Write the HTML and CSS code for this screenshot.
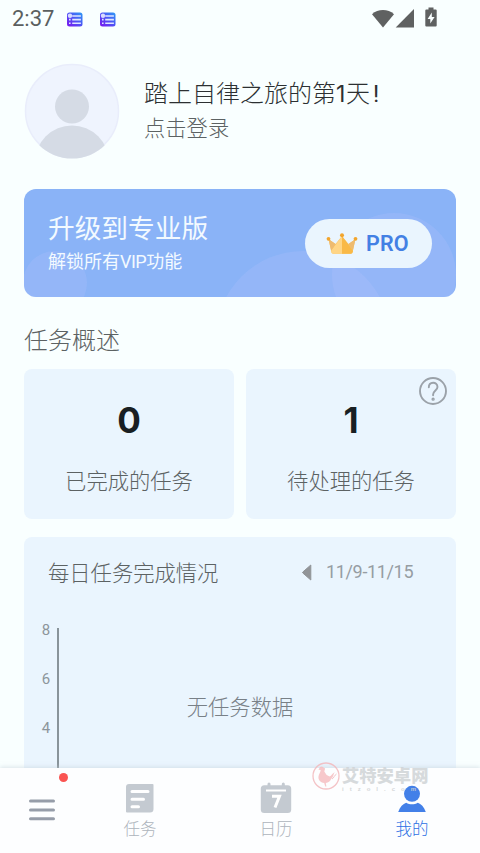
FILE: index.html
```html
<!DOCTYPE html>
<html lang="zh-CN">
<head>
<meta charset="utf-8">
<meta name="viewport" content="width=device-width, initial-scale=1">
<title>我的</title>
<link rel="stylesheet" href="styles.css">
</head>
<body>
<div class="app">
  <header class="status">
    <span class="clock">2:37</span>
    <svg class="notice" viewBox="0 0 16 15"><defs><linearGradient id="g" x1="0" y1="1" x2="1" y2="0"><stop offset="0.1" stop-color="#7420f0"/><stop offset="0.55" stop-color="#4b58f5"/><stop offset="1" stop-color="#2d9cf5"/></linearGradient></defs><rect y=".5" width="15.500" height="14" rx="2.500" fill="url(#g)"/><path d="M5.200 4h8.700M5.200 7.600h8.700M5.200 11.200h8.700M2 7.600h1.600M2 11.200h1.600" stroke="#dfe6ff" stroke-width="1.600"/><circle cx="3" cy="3.700" r="2.200" fill="#d8dcff"/></svg>
    <svg class="notice second" viewBox="0 0 16 15"><rect y=".5" width="15.500" height="14" rx="2.500" fill="url(#g)"/><path d="M5.200 4h8.700M5.200 7.600h8.700M5.200 11.200h8.700M2 7.600h1.600M2 11.200h1.600" stroke="#dfe6ff" stroke-width="1.600"/><circle cx="3" cy="3.700" r="2.200" fill="#d8dcff"/></svg>
    <svg class="signals" viewBox="0 0 68 22" fill="#5f6161"><path d="M1 7.200C7 1.600 17 1.600 23 7.200L12 20.500z"/><path d="M43 2v18.500H24.700z"/><path fill-rule="evenodd" d="M57.500 0.500h5v2h2.200a1 1 0 0 1 1 1v15a1 1 0 0 1-1 1h-9.400a1 1 0 0 1-1-1v-15a1 1 0 0 1 1-1h2.200zM60.800 5.500l-4.200 6.500h2.700v4.500l4.300-6.500h-2.800z"/></svg>
  </header>
  <main>
    <section class="profile">
      <svg class="avatar" viewBox="0 0 96 96"><defs><clipPath id="c"><circle cx="48" cy="48" r="47.500"/></clipPath></defs><circle cx="48" cy="48" r="46.500" fill="#eff4fe" stroke="#e9edfb" stroke-width="1.500"/><g clip-path="url(#c)" fill="#d5dbe5"><circle cx="48" cy="43.500" r="17"/><circle cx="48" cy="99.500" r="37"/></g></svg>
      <div>
        <h1>踏上自律之旅的第<span class="one">1</span>天<span class="bang">!</span></h1>
        <p>点击登录</p>
      </div>
    </section>
    <section class="banner">
      <svg class="bubbles" viewBox="0 0 432 108"><g fill="#c0c5ff" fill-opacity=".18"><circle cx="31" cy="94" r="32"/><circle cx="279" cy="149" r="87"/><circle cx="370" cy="86" r="62"/></g></svg>
      <div class="offer"><h2>升级到专业版</h2><p>解锁所有<span>VIP</span>功能</p></div>
      <div class="pro"><svg viewBox="0 0 32 22"><path d="M2.500 6l7 5L16 3l6.500 8 7-5-2.800 13a2 2 0 0 1-2 1.700H7.300a2 2 0 0 1-2-1.700z" fill="#f9c363"/><path d="M5 18l11-15v17.700H7.300a2 2 0 0 1-2-1.700z" fill="#ffd585"/><path d="M16 3l11 15-.3 1a2 2 0 0 1-2 1.700H16z" fill="#f9b947"/><path d="M2.500 6l7 5-4.300 6.500zM29.500 6l-7 5 4.300 6.500z" fill="#eebb70"/><g fill="#f2a52d"><circle cx="2.500" cy="5.800" r="1.900"/><circle cx="16" cy="2.300" r="2"/><circle cx="29.500" cy="5.800" r="1.900"/></g></svg><span>PRO</span></div>
    </section>
    <h3>任务概述</h3>
    <section class="stats">
      <div class="card stat"><b>0</b><span>已完成的任务</span></div>
      <div class="card stat"><b>1</b><span>待处理的任务</span>
        <svg class="help" viewBox="0 0 28 28" fill="none" stroke="#9ba2a9" stroke-width="1.900"><circle cx="14" cy="14" r="13"/><path d="M9.800 10.300C9.800 4.300 18.400 4.200 18.500 10c0 3.300-4.400 3.900-4.400 7.600v.6" stroke-linecap="round"/><circle cx="14.100" cy="22.200" r=".7"/></svg>
      </div>
    </section>
    <section class="card chart">
      <div class="chart-head"><h4>每日任务完成情况</h4><svg viewBox="0 0 10 17"><path d="M8.800 1v15L.8 9q-.6-.5 0-1z" fill="#919498" stroke="#919498" stroke-linejoin="round"/></svg><span>11/9-11/15</span></div>
      <div class="plot"><div class="axis"><span>8</span><span>6</span><span>4</span></div><div class="empty">无任务数据</div></div>
    </section>
  </main>
  <nav>
    <div class="menu"><svg viewBox="0 0 28 22" stroke="#969da9" stroke-width="3" stroke-linecap="round"><path d="M2.500 2h23M2.500 11h23M2.500 19.800h23"/></svg><i class="dot"></i></div>
    <div class="tab"><svg viewBox="0 0 32 32"><path d="M5 2h23.500a1 1 0 0 1 1 1v24a3.500 3.500 0 0 1-3.500 3.500H3a1 1 0 0 1-1-1V5a3 3 0 0 1 3-3z" fill="#c4cad1"/><path d="M8 9.500h16M8 17.200h11.500M8 24.700h6.500" stroke="#fff" stroke-width="3" stroke-linecap="round"/></svg><span>任务</span></div>
    <div class="tab"><svg viewBox="0 0 32 32"><rect x=".8" y="3.200" width="30.400" height="27.800" rx="3.500" fill="#c4cad1"/><path d="M9 2v4M23.300 2v4" stroke="#c4cad1" stroke-width="3" stroke-linecap="round"/><path d="M6 8.500h20" stroke="#fff" stroke-width="2"/><path d="M12 14.200h7.500L15 25.500" fill="none" stroke="#fff" stroke-width="3"/></svg><span>日历</span></div>
    <div class="tab active"><svg viewBox="0 0 32 32" fill="#4380e8"><circle cx="16" cy="11.800" r="8"/><path d="M2.200 30C4 25 7 21.800 10.200 20.800c3.600 2 8 2 11.600 0C25 21.800 28 25 29.800 30z"/></svg><span>我的</span></div>
  </nav>
  <div class="watermark"><svg viewBox="0 0 28 28"><circle cx="14" cy="14" r="13" fill="none" stroke="#f3b9bd" stroke-width="1.300"/><path d="M8 5l2-.6 1.500 1 1.600 1-.8 3 2.300 3.600 3 1.600c2-.7 2.600-3.300 5.200-4.300-1.600 1.500-1 4.500-3.500 6.500-1.200 2.500-3 3.800-5.500 4.200l.6 3.500h-1.200l-1-3.500c-4-.4-6.200-3.500-5.700-6.500.3-2.300 2-4 2.200-6.500L6.500 7.800z" fill="#f6bfc2"/><path d="M20 17c2-1 2.300-3.700 4.500-5" fill="none" stroke="#f3b9bd"/></svg><div><strong>艾特安卓网</strong><small>itzol.com</small></div></div>
</div>
</body>
</html>
```
FILE: styles.css
```css
* { box-sizing: border-box; }
body, h1, h2, h3, h4, p { margin: 0; font-weight: 400; }
body { font-family: "Noto Sans CJK SC", sans-serif; color: #5c6263; background: #f9ffff; }
svg { display: block; flex: none; }
.app { position: relative; width: 480px; height: 853px; overflow: hidden; display: flex; flex-direction: column; }
.status { height: 37px; flex: none; display: flex; align-items: center; padding: 1px 41px 0 12px; }
.clock { font: 22px/34px Roboto, sans-serif; color: #5b5f5f; width: 55px; }
.notice { width: 16px; height: 15px; }
.second { margin-left: 17px; }
.signals { width: 68px; height: 22px; margin: -2px 0 0 auto; }
main { flex: 1; min-height: 0; overflow: hidden; padding: 26px 24px 0; display: flex; flex-direction: column; }
.profile { display: flex; gap: 24px; height: 126px; flex: none; }
.avatar { width: 96px; height: 96px; }
.profile h1 { font-size: 24px; line-height: 34px; margin-top: 12px; color: #2c3032; font-weight: 300; white-space: nowrap; }
.one { font: 400 23px/34px Inter, sans-serif; display: inline-block; width: 10px; }
.bang { font-family: Roboto, sans-serif; font-weight: 400; margin-left: 3px; }
.profile p { font-size: 21.300px; line-height: 34px; margin-top: -1px; font-weight: 300; color: #5c6263; }
.banner { position: relative; display: flex; justify-content: space-between; height: 108px; flex: none; border-radius: 12px; background: #8ab3f7; padding: 0 24px; overflow: hidden; color: #f3faff; }
.bubbles { position: absolute; inset: 0; width: 432px; height: 108px; }
.offer { position: relative; padding-top: 19px; }
.offer h2 { font-size: 26.700px; line-height: 38px; }
.offer p { font-size: 18px; line-height: 28px; }
.offer span { font-family: Roboto, sans-serif; font-size: 18px; letter-spacing: -.5px; }
.pro { position: relative; width: 127px; height: 49px; margin-top: 30px; border-radius: 25px; background: #eaf5fe; display: flex; align-items: center; padding-left: 21px; gap: 8px; }
.pro svg { width: 32px; height: 22px; }
.pro span { font: 600 21.500px/30px Roboto, sans-serif; color: #4380e4; letter-spacing: .2px; }
h3 { font-size: 24px; line-height: 36px; margin: 24px 0 12px; font-weight: 300; flex: none; }
.card { background: #eaf5fe; border-radius: 8px; }
.stats { display: grid; grid-template-columns: 1fr 1fr; gap: 12px; flex: none; }
.stat { position: relative; height: 150px; display: flex; flex-direction: column; align-items: center; padding-top: 28px; }
.stat b { font: 700 35px/46px Inter, sans-serif; color: #191f23; }
.stat span { font-size: 21.300px; line-height: 32px; margin-top: 21px; font-weight: 300; }
.help { position: absolute; right: 9px; top: 8px; width: 28px; height: 28px; }
.chart { margin-top: 18px; height: 330px; flex: none; padding: 18px 0 0; }
.chart-head { display: flex; align-items: center; padding-left: 24px; height: 34px; }
h4 { font-size: 21.300px; line-height: 34px; font-weight: 300; width: 254px; }
.chart-head svg { width: 10px; height: 17px; margin-top: 1px; }
.chart-head span { font: 18px/24px Roboto, sans-serif; color: #969da3; margin-left: 14px; letter-spacing: -.35px; }
.plot { display: flex; height: 240px; margin-top: 39px; }
.axis { width: 35px; border-right: 2px solid #89949a; font: 15px/20px Roboto, sans-serif; color: #8d959b; text-align: center; padding-left: 11px; }
.axis span { display: block; height: 49px; position: relative; top: -8px; }
.empty { flex: 1; padding: 62px 35px 0 0; text-align: center; font-size: 21.300px; line-height: 32px; font-weight: 300; color: #788087; }
nav { position: relative; height: 85px; flex: none; background: #fdfeff; box-shadow: 0 -1px 4px #bdcbd580; display: grid; grid-template-columns: 72px 136px 136px 136px; }
.menu { position: relative; padding: 31px 0 0 28px; }
.menu svg { width: 28px; height: 22px; }
.dot { position: absolute; left: 59px; top: 5px; width: 9px; height: 9px; border-radius: 50%; background: #fa5452; }
.tab { display: flex; flex-direction: column; align-items: center; padding-top: 14px; color: #adb4bc; font-weight: 300; }
.tab svg { width: 32px; height: 32px; }
.tab span { font-size: 16.500px; line-height: 24px; margin-top: 2px; }
.active { color: #2d70e4; }
.watermark { position: absolute; left: 312px; top: 762px; display: flex; gap: 2px; opacity: .85; }
.watermark svg { width: 28px; height: 28px; }
.watermark strong { display: block; margin-top: 1px; font-size: 17.300px; line-height: 23px; font-weight: 900; color: #d0d4d7; white-space: nowrap; }
.watermark small { display: block; font: 700 6px/6px "Liberation Sans", sans-serif; letter-spacing: 6px; color: #cfd2d4; white-space: nowrap; }
```
